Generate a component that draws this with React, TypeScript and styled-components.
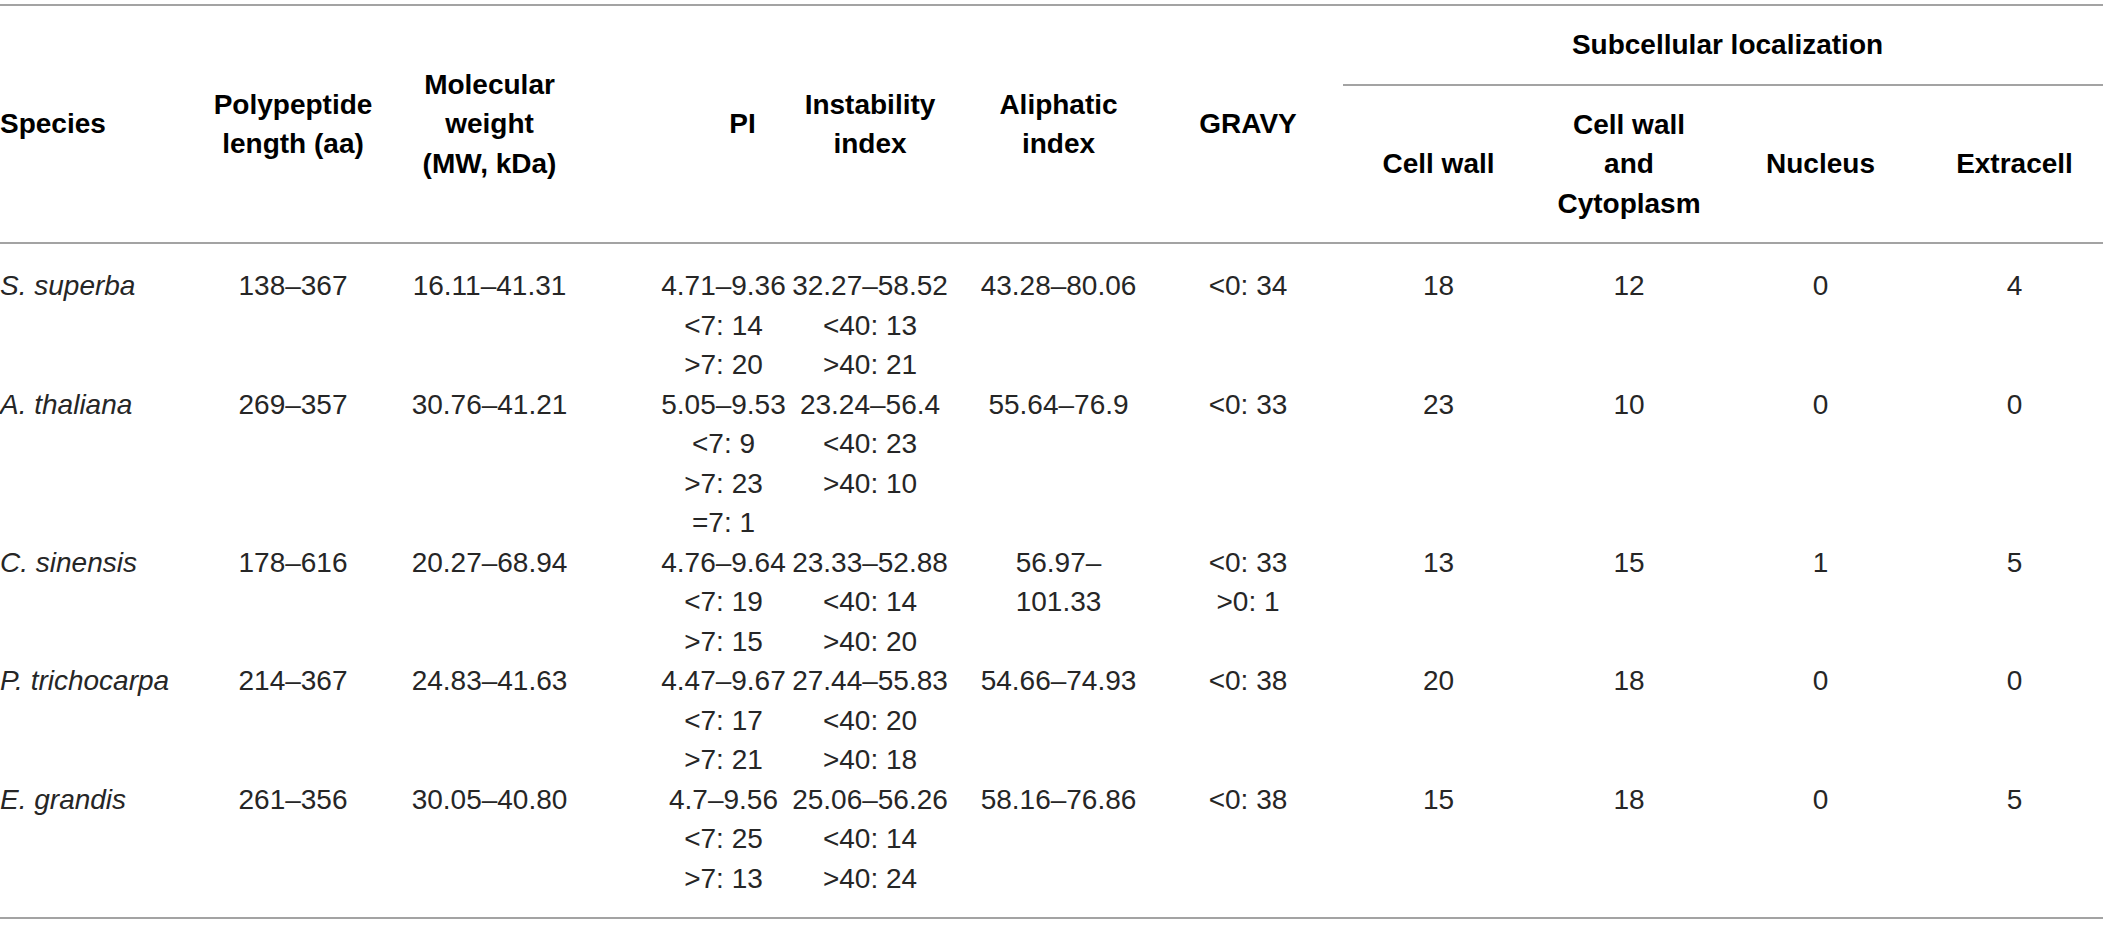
import styled, { createGlobalStyle } from 'styled-components';

type Row = {
  species: string;
  cells: string[][];
};

type Pad = { left?: number; right?: number };

const colWidths = [194, 198, 195, 199, 178, 189, 190, 191, 190, 193, 195];

// the PI values sit right of their column middle, the instability ones a bit left
const bodyPads: Pad[] = [{}, {}, { left: 74 }, { right: 10 }, {}, {}, {}, {}, {}, {}];

const rows: Row[] = [
  {
    species: 'S. superba',
    cells: [
      ['138–367'],
      ['16.11–41.31'],
      ['4.71–9.36', '<7: 14', '>7: 20'],
      ['32.27–58.52', '<40: 13', '>40: 21'],
      ['43.28–80.06'],
      ['<0: 34'],
      ['18'],
      ['12'],
      ['0'],
      ['4'],
    ],
  },
  {
    species: 'A. thaliana',
    cells: [
      ['269–357'],
      ['30.76–41.21'],
      ['5.05–9.53', '<7: 9', '>7: 23', '=7: 1'],
      ['23.24–56.4', '<40: 23', '>40: 10'],
      ['55.64–76.9'],
      ['<0: 33'],
      ['23'],
      ['10'],
      ['0'],
      ['0'],
    ],
  },
  {
    species: 'C. sinensis',
    cells: [
      ['178–616'],
      ['20.27–68.94'],
      ['4.76–9.64', '<7: 19', '>7: 15'],
      ['23.33–52.88', '<40: 14', '>40: 20'],
      ['56.97–', '101.33'],
      ['<0: 33', '>0: 1'],
      ['13'],
      ['15'],
      ['1'],
      ['5'],
    ],
  },
  {
    species: 'P. trichocarpa',
    cells: [
      ['214–367'],
      ['24.83–41.63'],
      ['4.47–9.67', '<7: 17', '>7: 21'],
      ['27.44–55.83', '<40: 20', '>40: 18'],
      ['54.66–74.93'],
      ['<0: 38'],
      ['20'],
      ['18'],
      ['0'],
      ['0'],
    ],
  },
  {
    species: 'E. grandis',
    cells: [
      ['261–356'],
      ['30.05–40.80'],
      ['4.7–9.56', '<7: 25', '>7: 13'],
      ['25.06–56.26', '<40: 14', '>40: 24'],
      ['58.16–76.86'],
      ['<0: 38'],
      ['15'],
      ['18'],
      ['0'],
      ['5'],
    ],
  },
];

const Lines = ({ lines }: { lines: string[] }) => (
  <>
    {lines.map((line, i) => (
      <span key={i}>
        {i > 0 && <br />}
        {line}
      </span>
    ))}
  </>
);

const App = () => {
  return (
    <Page>
      <GlobalStyle />
      <Table>
        <colgroup>
          {colWidths.map((w, i) => (
            <Col key={i} $width={w} />
          ))}
        </colgroup>
        <thead>
          <tr>
            <HeadCell rowSpan={2} $align="left">Species</HeadCell>
            <HeadCell rowSpan={2}>Polypeptide<br />length (aa)</HeadCell>
            <HeadCell rowSpan={2}>Molecular<br />weight<br />(MW, kDa)</HeadCell>
            <HeadCell rowSpan={2} $padLeft={112}>PI</HeadCell>
            <HeadCell rowSpan={2} $padRight={10}>Instability<br />index</HeadCell>
            <HeadCell rowSpan={2}>Aliphatic<br />index</HeadCell>
            <HeadCell rowSpan={2}>GRAVY</HeadCell>
            <HeadCell colSpan={4}>Subcellular localization</HeadCell>
          </tr>
          <tr>
            <SubHeadCell>Cell wall</SubHeadCell>
            <SubHeadCell>Cell wall<br />and<br />Cytoplasm</SubHeadCell>
            <SubHeadCell>Nucleus</SubHeadCell>
            <SubHeadCell>Extracell</SubHeadCell>
          </tr>
        </thead>
        <tbody>
          {rows.map((row) => (
            <BodyRow key={row.species}>
              <SpeciesCell>{row.species}</SpeciesCell>
              {row.cells.map((lines, i) => (
                <BodyCell key={i} $padLeft={bodyPads[i].left} $padRight={bodyPads[i].right}>
                  <Lines lines={lines} />
                </BodyCell>
              ))}
            </BodyRow>
          ))}
        </tbody>
      </Table>
    </Page>
  );
};

const GlobalStyle = createGlobalStyle`
  html, body {
    margin: 0;
    padding: 0;
    background: #fff;
  }

  body {
    font-family: 'Liberation Sans', Arial, Helvetica, sans-serif;
    color: #262626;
  }
`;

const Page = styled.div`
  width: 100%;
  overflow: hidden;
  padding-top: 4px;
`;

const Table = styled.table`
  width: 2112px;
  table-layout: fixed;
  border-collapse: separate;
  border-spacing: 0;
  font-size: 28px;
  line-height: 39.5px;
`;

const Col = styled.col<{ $width: number }>`
  width: ${(p) => p.$width}px;
`;

const HeadCell = styled.th<{ $align?: 'left' | 'center'; $padLeft?: number; $padRight?: number }>`
  padding: 19px ${(p) => p.$padRight ?? 0}px 19px ${(p) => p.$padLeft ?? 0}px;
  font-weight: 700;
  color: #000;
  text-align: ${(p) => p.$align ?? 'center'};
  vertical-align: middle;
  border-top: 2px solid #a3a3a3;
  border-bottom: 2px solid #a3a3a3;
  white-space: nowrap;
`;

const SubHeadCell = styled.th`
  padding: 19px 0;
  font-weight: 700;
  color: #000;
  text-align: center;
  vertical-align: middle;
  border-bottom: 2px solid #a3a3a3;
  white-space: nowrap;
`;

const BodyRow = styled.tr`
  &:first-child td {
    padding-top: 22px;
  }

  &:last-child td {
    padding-bottom: 19px;
    border-bottom: 2px solid #a3a3a3;
  }
`;

const BodyCell = styled.td<{ $padLeft?: number; $padRight?: number }>`
  padding: 0 ${(p) => p.$padRight ?? 0}px 0 ${(p) => p.$padLeft ?? 0}px;
  text-align: center;
  vertical-align: top;
  font-weight: 400;
  white-space: nowrap;
`;

const SpeciesCell = styled(BodyCell)`
  text-align: left;
  font-style: italic;
`;

export default App;
